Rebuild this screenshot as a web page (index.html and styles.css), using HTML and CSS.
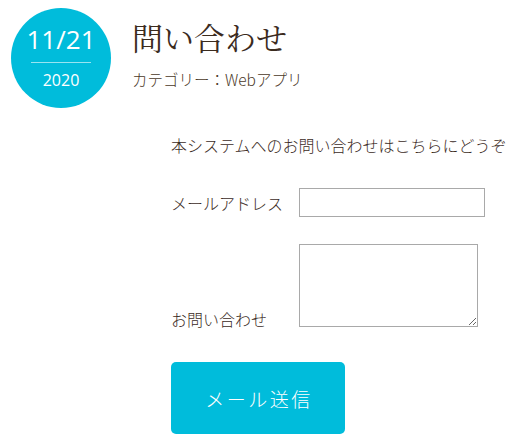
FILE: index.html
```
<!DOCTYPE html>
<html lang="ja">
<head>
<meta charset="utf-8">
<title>問い合わせ</title>
<link rel="stylesheet" href="styles.css">
</head>
<body>
<header class="post-header">
  <div class="date-badge">
    <div class="date-day">11/21</div>
    <div class="date-rule"></div>
    <div class="date-year">2020</div>
  </div>
  <div class="post-meta">
    <h1 class="post-title">問い合わせ</h1>
    <p class="post-category">カテゴリー：Webアプリ</p>
  </div>
</header>
<main class="post-body">
  <p class="intro">本システムへのお問い合わせはこちらにどうぞ</p>
  <form class="contact-form">
    <div class="form-row row-center">
      <label class="form-label" for="mail">メールアドレス</label>
      <input class="form-input" id="mail" type="text">
    </div>
    <div class="form-row row-end">
      <label class="form-label" for="msg">お問い合わせ</label>
      <textarea class="form-textarea" id="msg"></textarea>
    </div>
    <button class="submit-btn" type="button">メール送信</button>
  </form>
</main>
</body>
</html>
```
FILE: styles.css
```
html, body {
  margin: 0;
  padding: 0;
  background: #ffffff;
}
body {
  font-family: "Noto Sans CJK JP", "Noto Sans", sans-serif;
  font-weight: 300;
  color: #3b2b1e;
  width: 515px;
  overflow: hidden;
}
.post-header {
  display: flex;
  padding: 8px 0 0 11px;
}
.date-badge {
  width: 100px;
  height: 100px;
  border-radius: 50%;
  background: #00bcdb;
  color: #ffffff;
  text-align: center;
  font-family: "Open Sans", "Noto Sans", sans-serif;
  font-weight: 400;
  box-sizing: border-box;
  padding-top: 18px;
  flex: none;
}
.date-day {
  font-size: 26px;
  line-height: 26px;
}
.date-rule {
  width: 60px;
  height: 1px;
  margin: 10px auto 0;
  background: rgba(255, 255, 255, 0.6);
}
.date-year {
  font-size: 16px;
  line-height: 16px;
  margin-top: 9px;
}
.post-meta {
  margin-left: 21px;
  padding-top: 13px;
}
.post-title {
  margin: 0;
  font-family: "Noto Serif CJK JP", "IPAMincho", "Noto Sans CJK JP", serif;
  font-weight: 400;
  font-size: 31px;
  line-height: 32px;
  color: #3b2b1e;
}
.post-category {
  margin: 19px 0 0;
  font-size: 15.5px;
  line-height: 15px;
  color: #4a3828;
}
.post-body {
  margin-left: 171px;
  padding-top: 29px;
}
.intro {
  margin: 0;
  font-size: 16px;
  line-height: 16px;
  white-space: nowrap;
}
.contact-form {
  margin-top: 35px;
}
.form-row {
  display: flex;
}
.row-center {
  align-items: center;
}
.row-end {
  align-items: flex-end;
  margin-top: 27px;
}
.form-label {
  width: 128px;
  flex: none;
  font-size: 16px;
  line-height: 16px;
}
.row-center .form-label {
  padding-top: 1px;
}
.form-input {
  width: 186px;
  height: 29px;
  box-sizing: border-box;
  border: 1px solid #a9a9a9;
  margin: 0;
  padding: 2px 4px;
  font-size: 14px;
}
.form-textarea {
  width: 179px;
  height: 83px;
  box-sizing: border-box;
  border: 1px solid #a9a9a9;
  margin: 0;
  padding: 2px;
  display: block;
}
.submit-btn {
  display: block;
  margin-top: 35px;
  width: 174px;
  height: 72px;
  border: none;
  border-radius: 5px;
  background: #00bcdb;
  color: #ffffff;
  font-family: "Noto Sans CJK JP", sans-serif;
  font-weight: 300;
  font-size: 19px;
  letter-spacing: 2.5px;
  padding: 0 0 0 2px;
}
```
